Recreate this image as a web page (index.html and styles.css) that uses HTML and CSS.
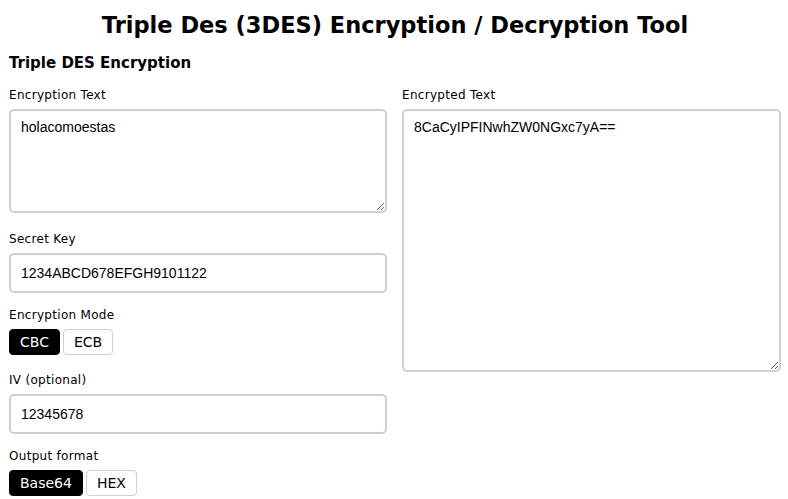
FILE: index.html
```html
<!DOCTYPE html>
<html lang="en">
<head>
<meta charset="utf-8">
<title>Triple Des (3DES) Encryption / Decryption Tool</title>
<link rel="stylesheet" href="styles.css">
</head>
<body>
<h1 class="title">Triple Des (3DES) Encryption / Decryption Tool</h1>
<h2 class="section-title">Triple DES Encryption</h2>
<div class="grid">
  <div class="col">
    <div class="field field-area">
      <label class="label">Encryption Text</label>
      <textarea class="box area-small">holacomoestas</textarea>
    </div>
    <div class="field">
      <label class="label">Secret Key</label>
      <input class="box input" type="text" value="1234ABCD678EFGH9101122">
    </div>
    <div class="field field-toggles">
      <label class="label">Encryption Mode</label>
      <div class="toggles">
        <button class="btn active">CBC</button>
        <button class="btn">ECB</button>
      </div>
    </div>
    <div class="field">
      <label class="label">IV (optional)</label>
      <input class="box input" type="text" value="12345678">
    </div>
    <div class="field">
      <label class="label">Output format</label>
      <div class="toggles">
        <button class="btn active">Base64</button>
        <button class="btn">HEX</button>
      </div>
    </div>
  </div>
  <div class="col">
    <div class="field">
      <label class="label">Encrypted Text</label>
      <textarea class="box area-large">8CaCyIPFINwhZW0NGxc7yA==</textarea>
    </div>
  </div>
</div>
</body>
</html>
```
FILE: styles.css
```css
html, body {
  margin: 0;
  padding: 0;
  background: #fff;
  color: #000;
}
body {
  font-family: "DejaVu Sans", "Open Sans", sans-serif;
  padding: 0 7px 0 9px;
}
.title {
  margin: 10px 0 0;
  text-align: center;
  font-size: 22.5px;
  font-weight: 700;
  line-height: 30px;
}
.section-title {
  margin: 13px 0 0;
  font-size: 15px;
  font-weight: 700;
  line-height: 20px;
}
.grid {
  display: grid;
  grid-template-columns: 378px 379px;
  column-gap: 15px;
  margin-top: 14px;
}
.col {
  display: flex;
  flex-direction: column;
  gap: 14px;
}
.field {
  display: flex;
  flex-direction: column;
}
.field-area {
  margin-bottom: 4px;
}
.field-toggles {
  margin-bottom: 3px;
}
.label {
  font-size: 12px;
  letter-spacing: 0.3px;
  line-height: 16px;
  margin-bottom: 6px;
}
.box {
  box-sizing: border-box;
  width: 100%;
  border: 2px solid #cfcfcf;
  border-radius: 5px;
  font-family: "Liberation Sans", Arial, sans-serif;
  font-size: 14px;
  color: #000;
  background: #fff;
  margin: 0;
  padding: 8px 10px;
  outline: none;
  display: block;
}
.area-small {
  height: 104px;
  resize: vertical;
}
.area-large {
  height: 263px;
  resize: vertical;
}
.input {
  height: 40px;
}
.toggles {
  display: flex;
  gap: 3px;
}
.btn {
  box-sizing: border-box;
  height: 26px;
  padding: 0 10px;
  border: 1px solid #d0d0d0;
  border-radius: 4px;
  background: #fff;
  color: #000;
  font-family: "DejaVu Sans", sans-serif;
  font-size: 14px;
  margin: 0;
}
.btn.active {
  background: #000;
  border-color: #000;
  color: #fff;
}
```
